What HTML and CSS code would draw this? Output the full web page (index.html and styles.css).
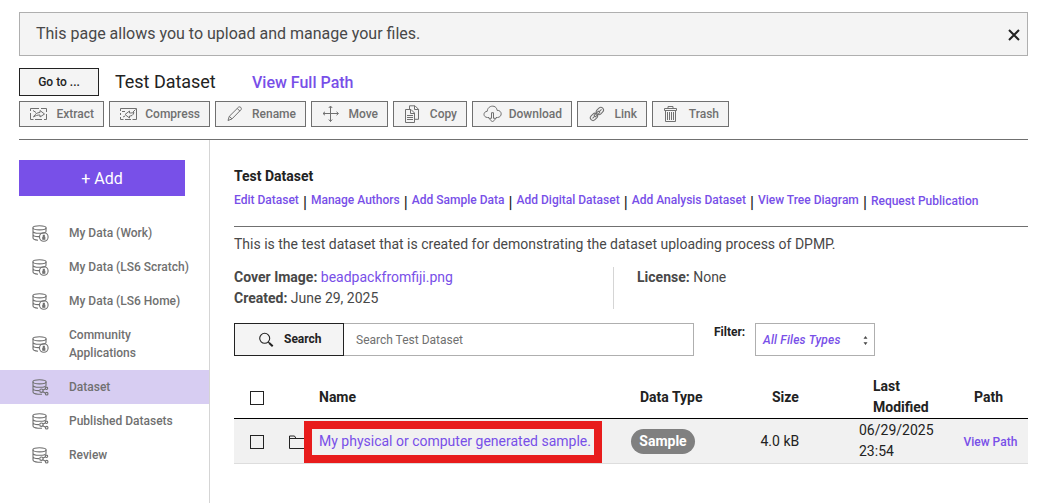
FILE: index.html
```
<!DOCTYPE html>
<html lang="en">
<head>
<meta charset="utf-8">
<title>Test Dataset</title>
<link rel="stylesheet" href="styles.css">
</head>
<body>
<svg class="defs" width="0" height="0">
  <symbol id="disks" viewBox="0 0 17 17">
    <ellipse cx="7.5" cy="2.8" rx="6.6" ry="2.1"/>
    <path d="M1 2.800v10c0 1.300 2 2.200 5 2.400M14 2.800v4M1 6.200c0 2.600 11.500 2.800 13 .5M1 9.600c.3 1.400 3 2.100 6 2"/>
  </symbol>
  <symbol id="mydata" viewBox="0 0 17 17">
    <use href="#disks" width="17" height="17"/>
    <circle cx="11.800" cy="12" r="4.300"/>
    <path d="M10.800 14.200v-1.900h2v1.900zM11.300 11.200v-1h1v1z" fill="currentColor"/>
  </symbol>
  <symbol id="shared" viewBox="0 0 17 17">
    <use href="#disks" width="17" height="17"/>
    <circle cx="9.400" cy="11.700" r="1.700"/><circle cx="14.500" cy="9.300" r="1.200"/><circle cx="14.700" cy="14.700" r="1.300"/>
    <path d="M11 11l2.300-1.100M10.800 12.800l2.800 1.400M6 15.300h4"/>
  </symbol>
</svg>
<div class="banner"><span>This page allows you to upload and manage your files.</span>
  <svg class="close" width="12" height="12" viewBox="0 0 12 12"><path d="M1 1l10 10M11 1L1 11"/></svg>
</div>
<div class="heading">
  <button class="goto">Go to ...</button>
  <span class="title">Test Dataset</span>
  <a class="fullpath">View Full Path</a>
</div>
<div class="toolbar">
  <button class="tool extract"><svg width="18" height="18" viewBox="0 0 18 18"><path d="M.5 6V3.500H9M11 3.500h5.500V7M16.500 9v5.500H14M12 14.500H5M3.500 14.500h-3V8M3 5.500l3 2M3.500 12c1.500-3 3.500-4.500 6.500-4.500V5.500L14.500 9 10 12v-2c-2.500 0-4.500.5-6.500 2z"/></svg><span>Extract</span></button>
  <button class="tool compress"><svg width="18" height="18" viewBox="0 0 18 18"><path d="M.5 6V3.500h16v11h-4M11 14.500H5M3.500 14.500h-3V12M.5 10V8M2 6.500h3M3 12l2-1M15.500 4.500L13 7M14 7.500c-1 3-2.500 3.500-4.500 3.500v2L5 9.500l4.500-3.500v2c2 0 3-.1 4.500-.5z"/></svg><span>Compress</span></button>
  <button class="tool rename"><svg width="18" height="18" viewBox="0 0 18 18"><path d="M2 15.500l1.300-4.200L12.600 2.100c1.500-1 3.500.9 2.500 2.500L6 13.900zM3.300 11.300L6 13.900M11.300 3.500l2.600 2.600"/></svg><span>Rename</span></button>
  <button class="tool move"><svg width="18" height="18" viewBox="0 0 18 18"><path d="M8.500 1.500v15M1 8.500h15M6.800 3L8.500 1l1.700 2M6.800 14.500l1.700 2 1.700-2M3 6.800L1 8.500l2 1.700M14.500 6.800l2 1.700-2 1.700"/></svg><span>Move</span></button>
  <button class="tool copy"><svg width="18" height="18" viewBox="0 0 18 18"><path d="M5.500 4V.8h5.500L14.500 4.300v10h-3.500M10.500 1v3.500H14.500M1.500 4.500h5.500L10.500 8v9.500h-9zM6.500 4.500v4H10.500M3 10.500h6M3 12.500h6M3 14.500h6"/></svg><span>Copy</span></button>
  <button class="tool download"><svg width="19" height="18" viewBox="0 0 19 18"><path d="M6 12.500H4.400C-.2 12.200 0 6.500 4.200 6.300 4.700-.3 13.700-.5 14 5.300c5.500-.1 5.500 7 .4 7.200H13M8.500 7.700h2v5.600h2.600L9.500 17l-3.600-3.700h2.600z"/></svg><span>Download</span></button>
  <button class="tool link"><svg width="18" height="18" viewBox="0 0 18 18"><g transform="rotate(-45 9 9)"><rect x=".8" y="6.200" width="8" height="5.400" rx="2.700"/><rect x="9.200" y="6.200" width="8" height="5.400" rx="2.700"/><path d="M2.800 8.900h3.500M12 8.900h3.500M6 7.900h6v2H6z"/></g></svg><span>Link</span></button>
  <button class="tool trash"><svg width="18" height="18" viewBox="0 0 18 18"><path d="M1.500 3.500h12v2h-12zM5 3.500v-2h5v2M2.500 5.500v11h10v-11M4.500 7v8M6.500 7v8M8.500 7v8M10.500 7v8"/></svg><span>Trash</span></button>
</div>
<div class="body">
  <nav class="side">
    <button class="add">+ Add</button>
    <a class="item"><svg width="17" height="17"><use href="#mydata"/></svg><span>My Data (Work)</span></a>
    <a class="item"><svg width="17" height="17"><use href="#mydata"/></svg><span>My Data (LS6 Scratch)</span></a>
    <a class="item"><svg width="17" height="17"><use href="#mydata"/></svg><span>My Data (LS6 Home)</span></a>
    <a class="item tall"><svg width="17" height="17"><use href="#mydata"/></svg><span>Community<br>Applications</span></a>
    <a class="item active"><svg width="17" height="17"><use href="#shared"/></svg><span>Dataset</span></a>
    <a class="item"><svg width="17" height="17"><use href="#shared"/></svg><span>Published Datasets</span></a>
    <a class="item"><svg width="17" height="17"><use href="#shared"/></svg><span>Review</span></a>
  </nav>
  <main class="main">
    <h1>Test Dataset</h1>
    <div class="links"><a>Edit Dataset</a><i>|</i><a>Manage Authors</a><i>|</i><a>Add Sample Data</a><i>|</i><a>Add Digital Dataset</a><i>|</i><a>Add Analysis Dataset</a><i>|</i><a>View Tree Diagram</a><i>|</i><a class="request">Request Publication</a></div>
    <p class="desc">This is the test dataset that is created for demonstrating the dataset uploading process of DPMP.</p>
    <div class="meta">
      <div class="col"><div><b>Cover Image:</b> <a>beadpackfromfiji.png</a></div><div><b>Created:</b> June 29, 2025</div></div>
      <div class="col"><div><b>License:</b> None</div></div>
    </div>
    <div class="filters">
      <button class="search"><svg width="16" height="16" viewBox="0 0 16 16"><circle cx="6.700" cy="6.300" r="5"/><path d="M10.300 10l1.200 1.200"/><path class="handle" d="M11.200 11l3.500 3.300"/></svg><span>Search</span></button>
      <div class="query">Search Test Dataset</div>
      <span class="label">Filter:</span>
      <div class="select"><span>All Files Types</span><svg width="5" height="9" viewBox="0 0 5 9"><path d="M.5 2.800L2.500 0l2 2.800zM.5 6.200h4L2.500 9z"/></svg></div>
    </div>
    <div class="grid head">
      <span class="box"></span><span></span><span>Name</span><span>Data Type</span><span>Size</span><span>Last<br>Modified</span><span>Path</span>
    </div>
    <div class="grid row">
      <span class="box"></span>
      <svg class="folder" width="18" height="14" viewBox="0 0 18 14"><path d="M.5 13.500V1h5L7 3.500h10v10zM.5 3.500H7"/></svg>
      <a class="name">My physical or computer generated sample.<span class="mark"></span></a>
      <span class="pill">Sample</span><span class="size">4.0 kB</span><span class="date">06/29/2025<br>23:54</span><a class="view">View Path</a>
    </div>
  </main>
</div>
</body>
</html>
```
FILE: styles.css
```
* { box-sizing: border-box; }
body { margin: 0; height: 503px; overflow: hidden; padding-top: 12px; background: #fff; color: #222; font: 14px/21px Roboto, sans-serif; display: flex; flex-direction: column; }
.defs { display: none; }
button { font: inherit; margin: 0; padding: 0; border-radius: 0; color: inherit; }
svg { fill: none; stroke: currentColor; flex: none; }
a { color: #784fe8; }
.banner { margin: 0 18px 0 19px; height: 44px; flex: none; border: 1px solid #afafaf; background: #f4f4f4; color: #484848; font-size: 16px; padding: 0 7px 2px 16px; display: flex; align-items: center; justify-content: space-between; }
.close { color: #222; stroke-width: 2; position: relative; top: 2px; }
.heading { display: flex; align-items: center; height: 28px; margin: 12px 0 0 19px; flex: none; }
.goto { width: 80px; height: 28px; border: 1px solid #222; background: #f4f4f4; font-size: 12px; font-weight: 500; }
.title { font-size: 18px; width: 137px; margin-left: 16px; padding-bottom: 2px; letter-spacing: -0.03px; }
.fullpath { font-size: 16px; font-weight: 500; }
.toolbar { display: flex; gap: 5px; margin: 5px 18px 0 19px; height: 39px; flex: none; border-bottom: 1px solid #707070; }
.tool { height: 26px; border: 1px solid #707070; background: #f4f4f4; color: #707070; font-size: 12px; font-weight: 500; padding: 0 9px 0 10px; display: flex; align-items: center; justify-content: space-between; }
.tool svg { stroke-width: 1; }
.extract { width: 85px; } .compress { width: 101px; } .rename { width: 91px; } .move { width: 77px; }
.copy { width: 74px; } .download { width: 100px; } .link { width: 70px; } .trash { width: 77px; }
.body { display: flex; flex: 1; }
.side { width: 210px; border-right: 1px solid #d5d5d5; padding-top: 20px; }
.add { display: block; width: 166px; height: 36px; margin: 0 0 20px 19px; border: 0; background: #7850e8; color: #fff; font-size: 16px; }
.item { display: flex; align-items: center; height: 34px; padding-left: 32px; gap: 20px; color: #707070; font-size: 12px; line-height: 18px; font-weight: 500; }
.item.tall { height: 52px; }
.item.active { background: #d7cdf2; }
.item svg { stroke-width: 1.1; }
.main { width: 794px; margin-left: 24px; }
h1 { margin: 26px 0 0; font-size: 14px; line-height: 21px; font-weight: 700; }
.links { display: flex; height: 40px; border-bottom: 1px solid #707070; font-size: 12px; font-weight: 500; line-height: 18px; padding-top: 4px; white-space: nowrap; }
.links i { width: 12.1px; text-align: center; font-style: normal; font-size: 16px; line-height: 24px; }
.request { padding-top: 1px; }
.desc { margin: 7px 0 12px; color: #484848; }
.meta { display: flex; height: 42px; color: #484848; }
.meta .col { width: 380px; }
.meta .col + .col { border-left: 1px solid #d5d5d5; padding-left: 23px; margin-left: -1px; }
.meta b { font-weight: 700; }
.filters { display: flex; height: 33px; margin-top: 14px; font-size: 12px; }
.search { width: 110px; border: 1px solid #222; background: #f4f4f4; font-weight: 700; font-size: 12px; display: flex; align-items: center; padding-left: 23px; gap: 10px; }
.search span { padding-bottom: 1px; }
.search svg { stroke-width: 1.1; }
.handle { stroke-width: 2; }
.query { width: 350px; border: 1px solid #afafaf; border-left: 0; padding-left: 12px; line-height: 32px; color: #707070; }
.label { width: 61px; padding-left: 20px; line-height: 18px; font-weight: 700; }
.select { width: 120px; border: 1px solid #afafaf; color: #784fe8; font-style: italic; font-weight: 500; display: flex; align-items: center; justify-content: space-between; padding: 1px 6px 0 7px; }
.select span { letter-spacing: 0.18px; }
.select svg { fill: #484848; stroke: none; }
.grid { display: grid; grid-template-columns: 55px 30px 312px 127px 98px 105px 67px; align-items: center; }
.head { height: 63px; padding-top: 20px; border-bottom: 1px solid #000; font-weight: 700; }
.head .box { margin-top: 1px; }
.head > :nth-child(4) { padding-left: 9px; }
.head > :nth-child(5) { padding-left: 14px; }
.head > :nth-child(6) { padding-left: 17px; }
.head > :nth-child(7) { padding-left: 13px; }
.row { height: 45px; background: #f1f1f1; border-bottom: 1px solid #ddd; }
.box { width: 14px; height: 14px; margin-left: 16px; border: 1px solid #222; background: #fff; }
.row .box { background: transparent; margin-top: 1px; }
.name { position: relative; }
.mark { position: absolute; left: -15px; top: -10px; width: 298px; height: 42px; border: 8px solid #e81c1c; }
.folder { margin-top: 1px; }
.pill { width: 64px; height: 25px; border-radius: 13px; background: #808080; color: #fff; font-weight: 700; text-align: center; line-height: 24px; }
.size { padding-left: 2.5px; }
.date { padding-left: 3px; }
.view { font-size: 12px; font-weight: 500; padding: 2px 0 0 2.5px; }
```
